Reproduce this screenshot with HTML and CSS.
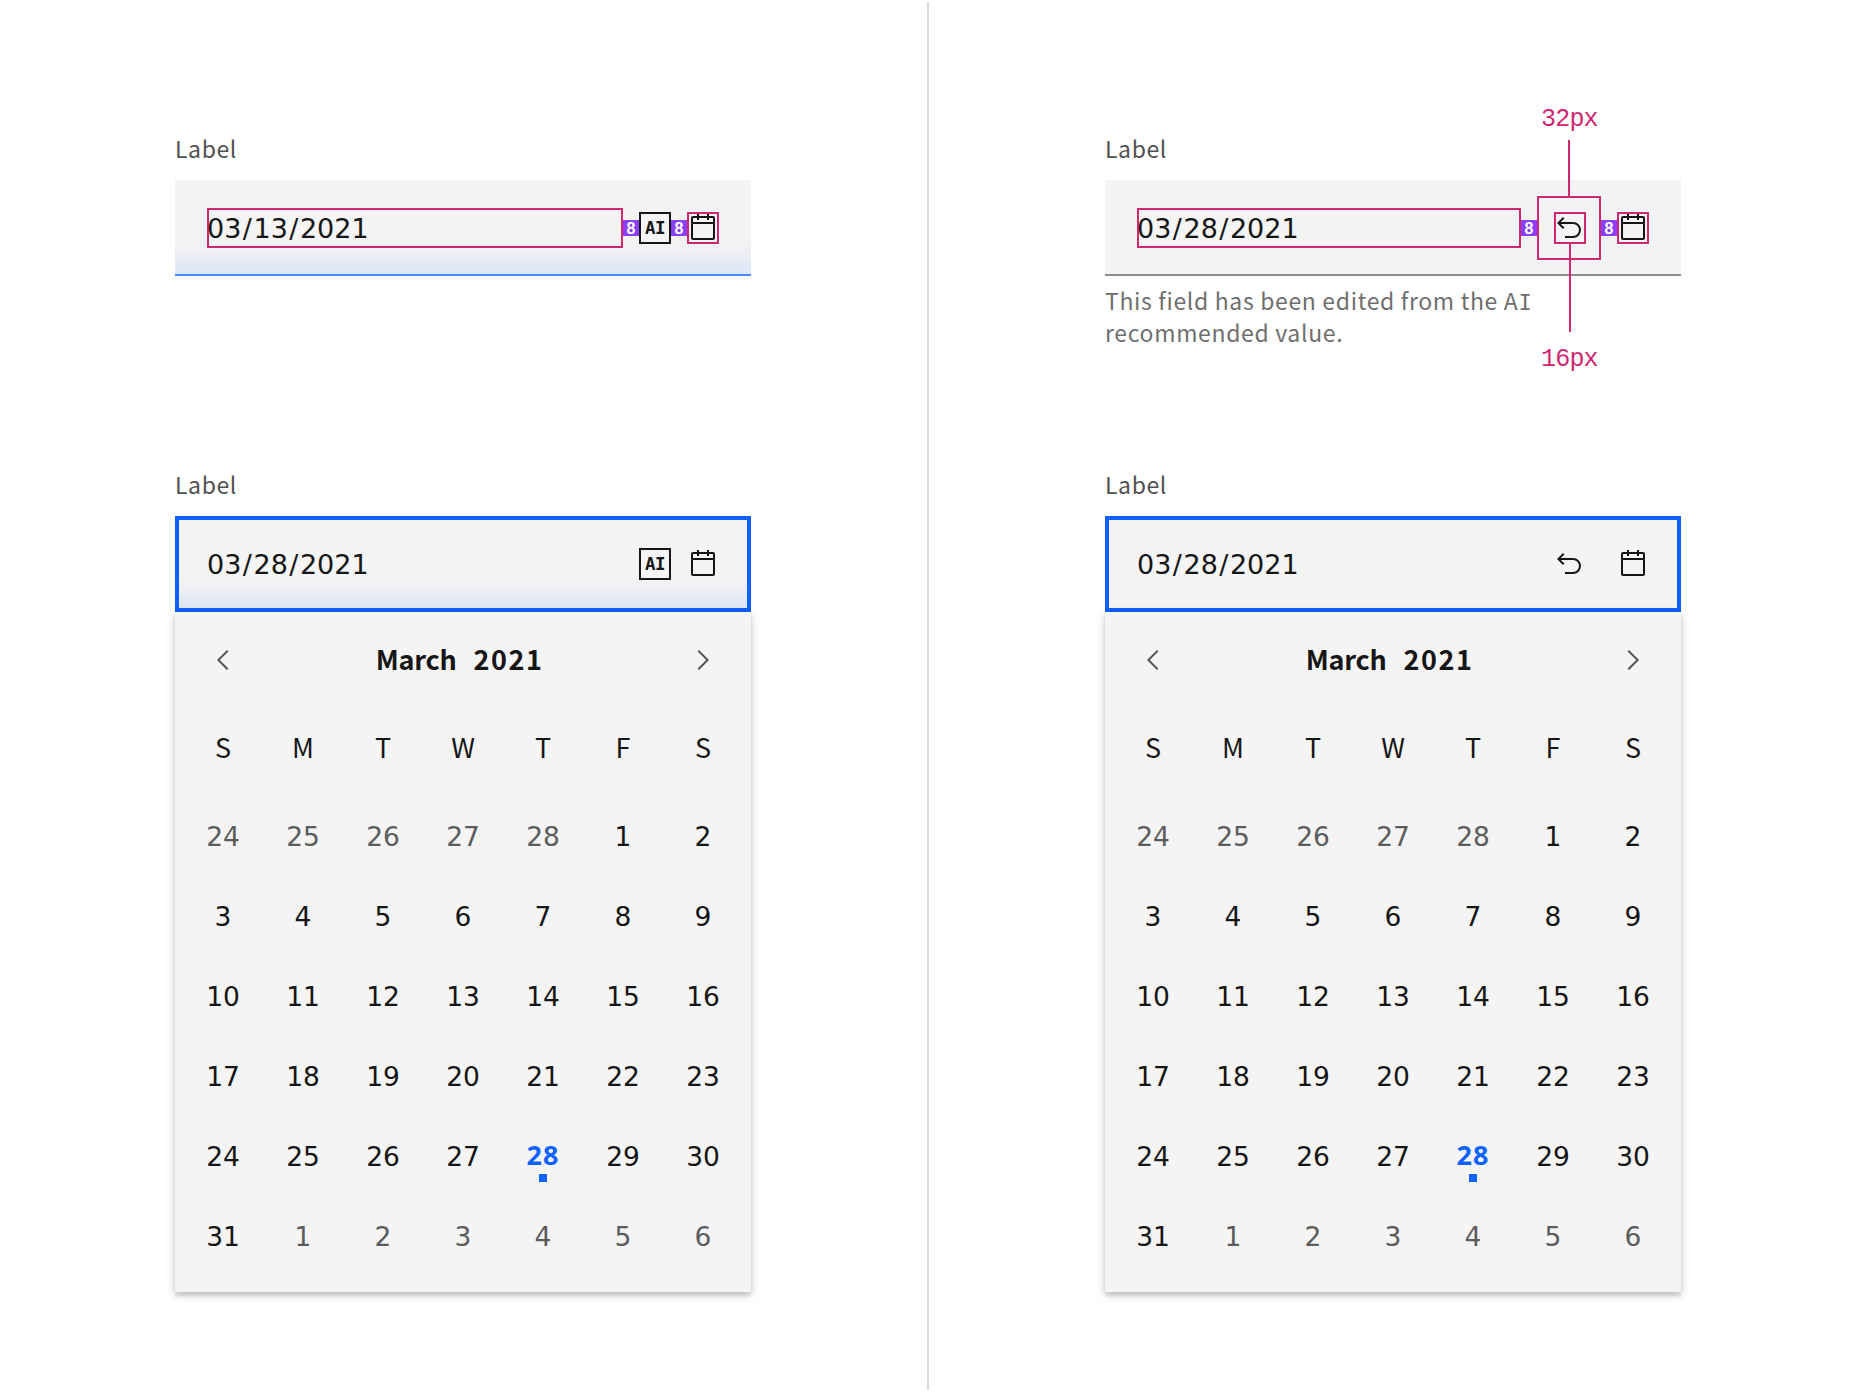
FILE: index.html
```html
<!DOCTYPE html>
<html lang="en">
<head>
<meta charset="utf-8">
<title>Date picker with AI label</title>
<link rel="stylesheet" href="styles.css">
</head>
<body>
<svg class="defs" aria-hidden="true">
  <symbol id="calendar" viewBox="0 0 32 32"><path d="M26 4h-4V2h-2v2h-8V2h-2v2H6a2 2 0 0 0-2 2v20a2 2 0 0 0 2 2h20a2 2 0 0 0 2-2V6a2 2 0 0 0-2-2zm0 22H6V12h20zm0-16H6V6h4v2h2V6h8v2h2V6h4z"/></symbol>
  <symbol id="undo" viewBox="0 0 32 32"><path d="M20 10H7.815l3.587-3.586L10 5l-6 6 6 6 1.402-1.415L7.818 12H20a6 6 0 0 1 0 12h-8v2h8a8 8 0 0 0 0-16z"/></symbol>
  <symbol id="prev" viewBox="0 0 32 32"><path d="M10 16 20 6l1.4 1.4-8.6 8.6 8.6 8.6L20 26z"/></symbol>
  <symbol id="next" viewBox="0 0 32 32"><path d="M22 16 12 26l-1.400-1.400 8.600-8.600-8.600-8.600L12 6z"/></symbol>
</svg>
<main class="board">
  <section class="panel">
    <div class="example example-top">
      <div class="label">Label</div>
      <div class="field field-ai">
        <div class="value outlined">03<i>/</i>13<i>/</i>2021</div>
        <span class="space">8</span>
        <span class="ai">AI</span>
        <span class="space">8</span>
        <span class="icon outlined"><svg><use href="#calendar"/></svg></span>
      </div>
    </div>
    <div class="example">
      <div class="label">Label</div>
      <div class="field field-ai field-focus">
        <div class="value">03<i>/</i>28<i>/</i>2021</div>
        <span class="ai">AI</span>
        <span class="icon gap"><svg><use href="#calendar"/></svg></span>
      </div>
      <div class="calendar">
        <div class="month"><svg><use href="#prev"/></svg><div class="title"><b>March</b><b class="year">2021</b></div><svg><use href="#next"/></svg></div>
        <div class="grid weekdays"><span>S</span><span>M</span><span>T</span><span>W</span><span>T</span><span>F</span><span>S</span></div>
        <div class="grid days">
          <span class="out">24</span><span class="out">25</span><span class="out">26</span><span class="out">27</span><span class="out">28</span><span>1</span><span>2</span>
          <span>3</span><span>4</span><span>5</span><span>6</span><span>7</span><span>8</span><span>9</span>
          <span>10</span><span>11</span><span>12</span><span>13</span><span>14</span><span>15</span><span>16</span>
          <span>17</span><span>18</span><span>19</span><span>20</span><span>21</span><span>22</span><span>23</span>
          <span>24</span><span>25</span><span>26</span><span>27</span><span class="today">28</span><span>29</span><span>30</span>
          <span>31</span><span class="out">1</span><span class="out">2</span><span class="out">3</span><span class="out">4</span><span class="out">5</span><span class="out">6</span>
        </div>
      </div>
    </div>
  </section>
  <div class="divider"></div>
  <section class="panel">
    <div class="example example-top">
      <div class="label">Label</div>
      <div class="field">
        <div class="value outlined">03<i>/</i>28<i>/</i>2021</div>
        <span class="space">8</span>
        <span class="button outlined">
          <span class="callout above">32px</span>
          <span class="icon outlined inner"><svg><use href="#undo"/></svg></span>
          <span class="callout below">16px</span>
        </span>
        <span class="space">8</span>
        <span class="icon outlined"><svg><use href="#calendar"/></svg></span>
      </div>
      <p class="helper">This field has been edited from the A<span class="slab">I</span><br>recommended value.</p>
    </div>
    <div class="example">
      <div class="label">Label</div>
      <div class="field field-focus">
        <div class="value">03<i>/</i>28<i>/</i>2021</div>
        <span class="button"><span class="icon"><svg><use href="#undo"/></svg></span></span>
        <span class="icon gap"><svg><use href="#calendar"/></svg></span>
      </div>
      <div class="calendar">
        <div class="month"><svg><use href="#prev"/></svg><div class="title"><b>March</b><b class="year">2021</b></div><svg><use href="#next"/></svg></div>
        <div class="grid weekdays"><span>S</span><span>M</span><span>T</span><span>W</span><span>T</span><span>F</span><span>S</span></div>
        <div class="grid days">
          <span class="out">24</span><span class="out">25</span><span class="out">26</span><span class="out">27</span><span class="out">28</span><span>1</span><span>2</span>
          <span>3</span><span>4</span><span>5</span><span>6</span><span>7</span><span>8</span><span>9</span>
          <span>10</span><span>11</span><span>12</span><span>13</span><span>14</span><span>15</span><span>16</span>
          <span>17</span><span>18</span><span>19</span><span>20</span><span>21</span><span>22</span><span>23</span>
          <span>24</span><span>25</span><span>26</span><span>27</span><span class="today">28</span><span>29</span><span>30</span>
          <span>31</span><span class="out">1</span><span class="out">2</span><span class="out">3</span><span class="out">4</span><span class="out">5</span><span class="out">6</span>
        </div>
      </div>
    </div>
  </section>
</main>
</body>
</html>
```
FILE: styles.css
```css
* { box-sizing: border-box; }
body {
  margin: 0;
  background: #fff;
  color: #161616;
  font-family: "Noto Sans CJK JP", "Noto Sans", sans-serif;
}
.defs { position: absolute; width: 0; height: 0; }
svg { display: block; width: 32px; height: 32px; fill: currentColor; }

.board { display: flex; height: 1392px; overflow: hidden; }
.panel { flex: none; width: 927px; padding: 132px 0 0 175px; }
.panel:last-child { padding-left: 176px; }
.divider { flex: none; width: 2px; margin: 2px 0; background: #dcdcdc; }

.example { width: 576px; }
.example-top { height: 336px; }
.label {
  height: 48px;
  font-size: 23px;
  line-height: 32px;
  letter-spacing: .6px;
  color: #525252;
}

.field {
  display: flex;
  align-items: center;
  height: 96px;
  padding: 0 32px;
  background: #f4f4f4;
  box-shadow: inset 0 -2px #8d8d8d;
}
.field-ai {
  background: linear-gradient(#f4f4f4 60%, #eff0f4 75%, #e0e8f7 90%);
  box-shadow: inset 0 -2px #4589ff;
}
.field-focus { box-shadow: inset 0 0 0 4px #0f62fe; }

.value {
  flex: 1;
  height: 40px;
  font: 27px/40px "DejaVu Sans", sans-serif;
  padding-top: 1px;
}
.value i { font-style: normal; margin: 0 1.5px; }
.outlined { box-shadow: inset 0 0 0 2px #d12771; }
.icon { width: 32px; height: 32px; }
.inner { margin-left: 2px; }
.inner svg { margin-left: -1px; }
.gap { margin-left: 16px; }
.space {
  width: 16px;
  height: 16px;
  background: #8a3ffc;
  color: #fff;
  font: bold 16px/17px "Liberation Sans", sans-serif;
  text-align: center;
}
.ai {
  width: 32px;
  height: 32px;
  border: 2px solid #161616;
  font: bold 17.500px/28px "DejaVu Sans Mono", monospace;
  letter-spacing: -0.500px;
  text-align: center;
}
.button {
  position: relative;
  display: flex;
  align-items: center;
  justify-content: center;
  width: 64px;
  height: 64px;
}
.callout {
  position: absolute;
  left: 4px;
  font: 25px/30px "Liberation Mono", monospace;
  letter-spacing: -0.800px;
  color: #d12771;
}
.above { top: -91px; }
.below { top: 149px; }
.callout::after {
  content: "";
  position: absolute;
  width: 2px;
  background: #d12771;
}
.above::after { left: 27px; top: 35px; height: 56px; }
.below::after { left: 28px; top: -101px; height: 88px; }

.helper {
  margin: 8px 0 0;
  font-size: 23px;
  line-height: 32px;
  letter-spacing: .66px;
  color: #6f6f6f;
  white-space: nowrap;
}
.slab { font: 22px/1 "DejaVu Sans Mono", monospace; letter-spacing: 0; }

.calendar {
  height: 680px;
  padding: 0 8px 16px;
  background: #f4f4f4;
  box-shadow: 0 2px 10px rgba(0, 0, 0, .16), 0 4px 4px rgba(0, 0, 0, .14);
}
.month {
  display: flex;
  align-items: center;
  justify-content: space-between;
  height: 96px;
  padding: 0 24px;
}
.month svg { color: #525252; }
.title {
  display: flex;
  gap: 17px;
  padding: 0 7px 2px 0;
  font-size: 27px;
  line-height: 38px;
  letter-spacing: -.2px;
}
.year { letter-spacing: 1.5px; }
.grid { display: grid; grid-template-columns: repeat(7, 80px); grid-auto-rows: 80px; }
.grid span { display: flex; align-items: center; justify-content: center; }
.weekdays { font-size: 27px; }
.weekdays span { padding-bottom: 4px; }
.days { padding-top: 8px; font: 26.500px "DejaVu Sans", sans-serif; }
.days .out { color: #5c5c5c; }
.days .today {
  position: relative;
  padding-bottom: 3px;
  color: #0f62fe;
  font: bold 27px "Noto Sans", sans-serif;
  letter-spacing: 1px;
}
.today::after {
  content: "";
  position: absolute;
  left: 36px;
  top: 58px;
  width: 8px;
  height: 8px;
  background: #0f62fe;
}
```
